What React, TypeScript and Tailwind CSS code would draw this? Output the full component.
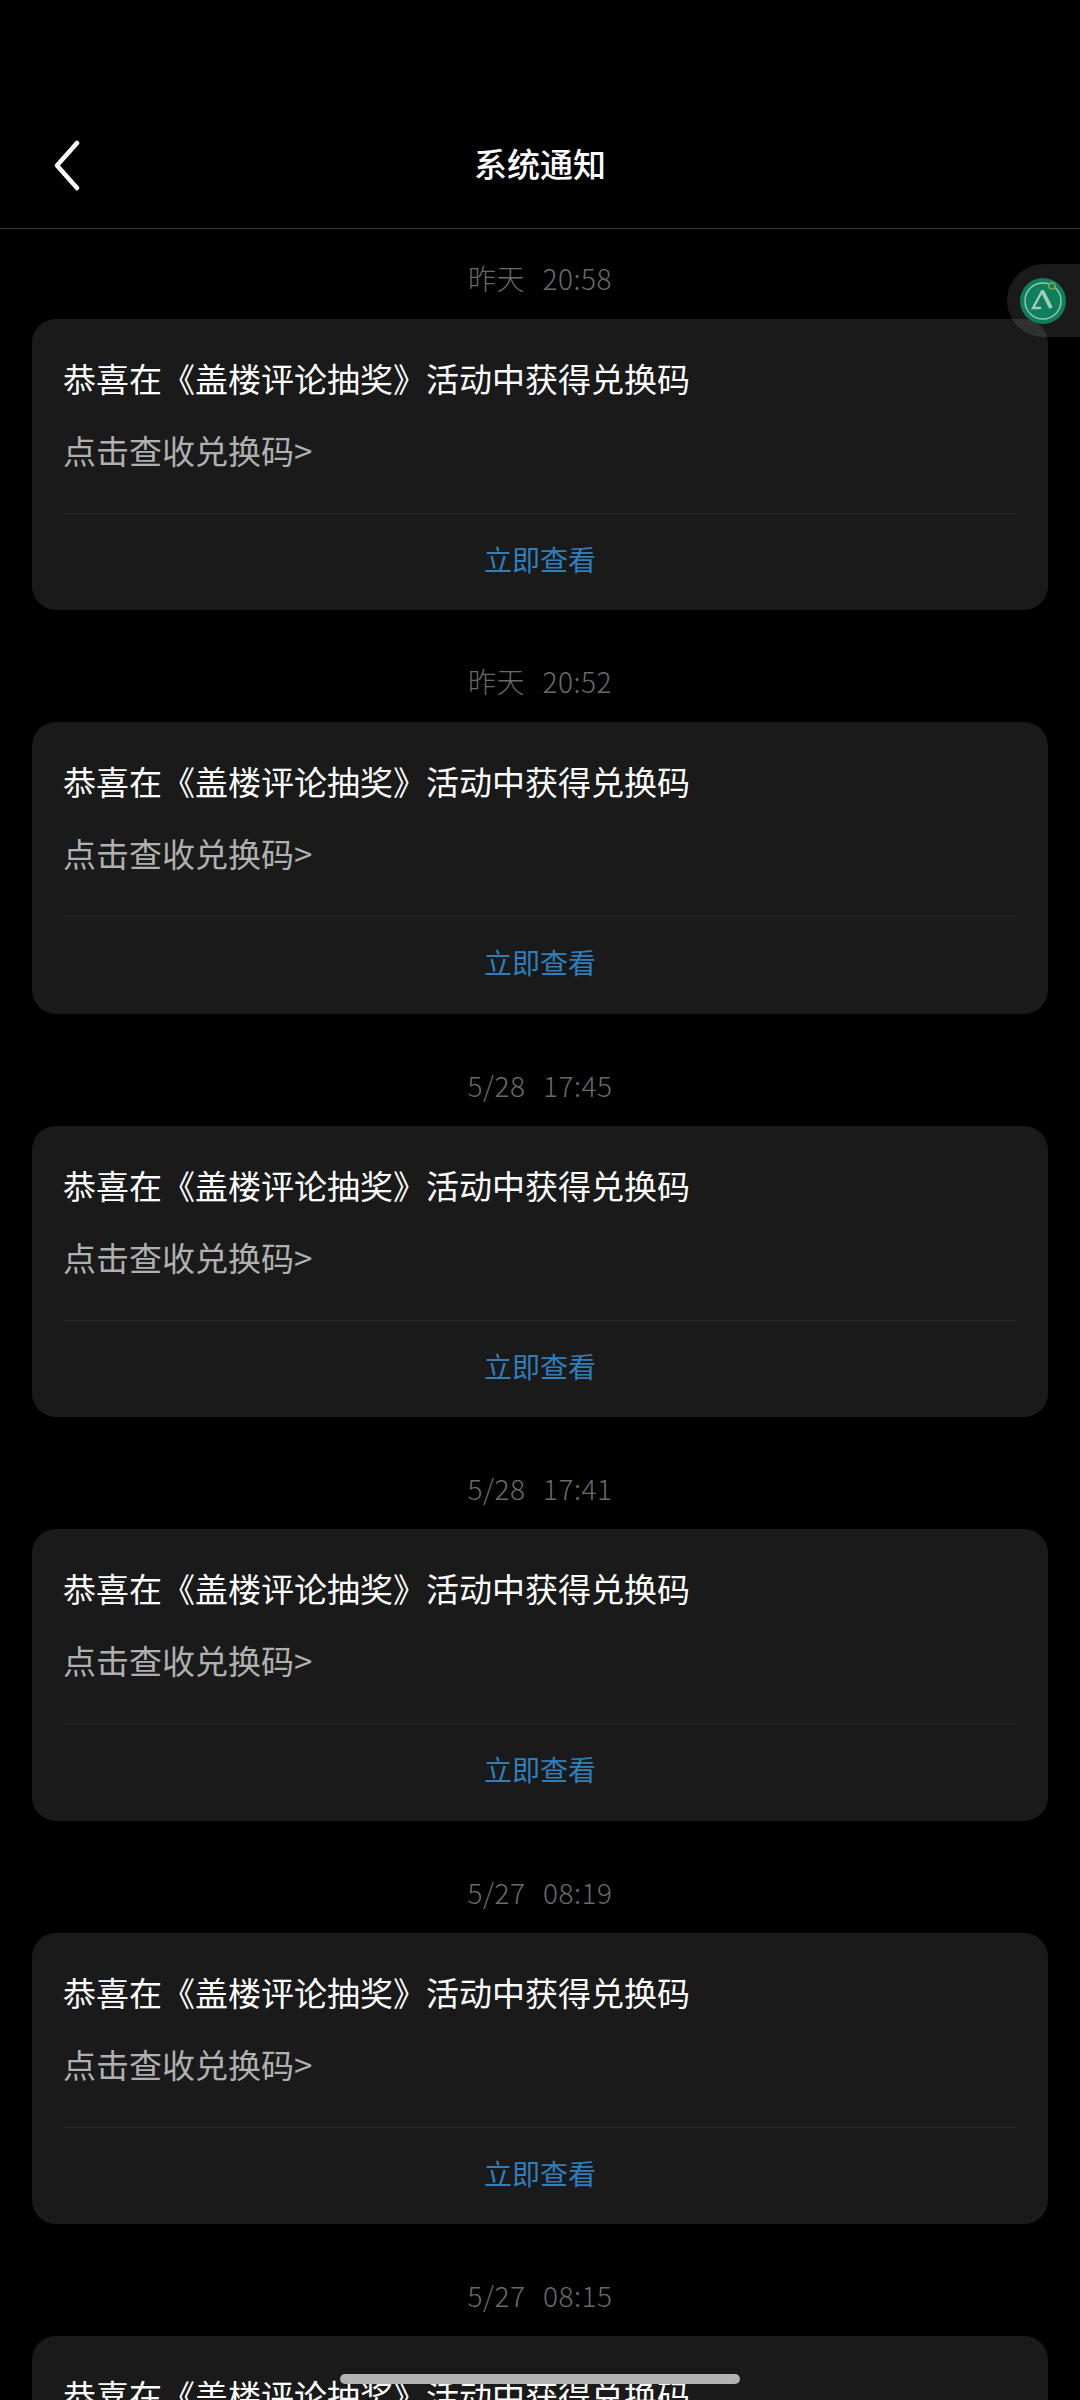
import React from 'react';

const notices = ['昨天  20:58', '昨天  20:52', '5/28  17:45', '5/28  17:41', '5/27  08:19', '5/27  08:15'];

const FloatBall = () => (
  <div className="absolute right-0 top-[264px] flex h-[73px] w-[73px] items-center rounded-l-full bg-white/10 pl-[13px]">
    <svg width="46" height="46" viewBox="0 0 46 46" fill="none">
      <circle cx="23" cy="23" r="23" fill="#0e7f5c" />
      <circle cx="23" cy="23" r="18" stroke="#93c2af" strokeWidth="1.5" />
      <circle cx="32" cy="8" r="3.2" fill="#0e7f5c" stroke="#9cae38" strokeWidth="1.2" />
      <path d="M22.5 12.5 L13 30 H21" stroke="#a9cbbd" strokeWidth="2.4" />
      <path d="M22 12.5 L31 30" stroke="#a9cbbd" strokeWidth="3.8" />
    </svg>
  </div>
);

const NoticeCard = ({ time }: { time: string }) => (
  <div>
    <div className="flex h-[80px] items-center justify-center whitespace-pre pb-[2px] text-[28px] font-light tracking-[0.5px] [word-spacing:2px] text-[#6a6a6a]">
      {time}
    </div>
    <div className="mb-[32px] flex h-[291.4px] flex-col rounded-[24px] bg-[#1a1a1a] px-[32px] pt-[35px]">
      <div className="-ml-px h-[48px] text-[33px] leading-[48px] whitespace-nowrap text-white">
        恭喜在《盖楼评论抽奖》活动中获得兑换码
      </div>
      <div className="-ml-px mt-[24px] h-[48px] text-[33px] leading-[48px] text-[#b0b0b0]">点击查收兑换码&gt;</div>
      <div className="mt-[39px] h-px bg-[#272727]" />
      <div className="flex h-[90px] items-center justify-center text-[28px] text-[#2f7fbd]">立即查看</div>
    </div>
  </div>
);

export default function App() {
  return (
    <div
      className="relative h-[2400px] w-[1080px] overflow-hidden bg-black"
      style={{ fontFamily: '"Noto Sans CJK SC", "Noto Sans", sans-serif' }}
    >
      <div className="flex h-[229px] items-end border-b border-[#3a3a3a] pb-[40px]">
        <div className="relative flex h-[48px] w-full items-center justify-center text-[33px] font-medium text-white">
          <svg className="absolute left-[50px] top-0" width="34" height="54" viewBox="0 0 34 54" fill="none">
            <path d="M27 3 L7 25.5 L27 48" stroke="#ffffff" strokeWidth="4.5" strokeLinecap="round" strokeLinejoin="round" />
          </svg>
          系统通知
        </div>
      </div>

      <div className="px-[32px] pt-[10px]">
        {notices.map((time) => (
          <NoticeCard key={time} time={time} />
        ))}
      </div>

      <FloatBall />
      <div className="absolute bottom-[16px] left-[340px] h-[10px] w-[400px] rounded-full bg-[#b3b3b3]" />
    </div>
  );
}
